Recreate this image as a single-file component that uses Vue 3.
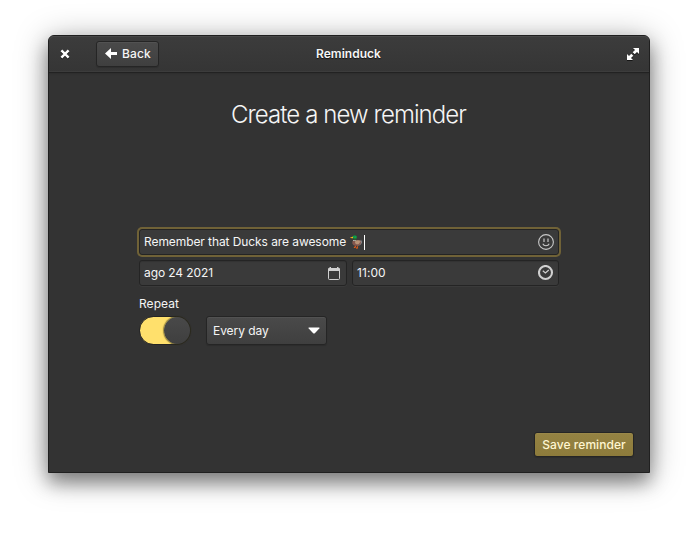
<script setup>
import { ref } from 'vue'

const message = ref('Remember that Ducks are awesome 🦆')
const date = ref('ago 24 2021')
const time = ref('11:00')
const interval = ref('Every day')
const repeat = ref(true)
</script>

<template>
  <div class="desktop">
    <main class="window">
      <header class="titlebar">
        <button class="icon-button close" aria-label="Close">
          <svg width="10" height="10" viewBox="0 0 10 10"><path d="M1.4 1.4 8.6 8.6M8.6 1.4 1.4 8.6" stroke="#fff" stroke-width="2.4" /></svg>
        </button>
        <button class="button back">
          <svg width="12" height="12" viewBox="0 0 12 12"><path d="M0 5.5 6 0V4H12V7H6V11Z" fill="#fff" /></svg>
          <span>Back</span>
        </button>
        <h1 class="title">Reminduck</h1>
        <button class="icon-button maximize" aria-label="Maximize">
          <svg width="12" height="12" viewBox="0 0 12 12"><path d="M6 0h6v6l-2-2-2.3 2.3-2-2L8 2zM0 6l2 2 2.3-2.3 2 2L4 10l2 2H0z" fill="#fff" /></svg>
        </button>
      </header>
      <section class="content">
        <h2 class="heading">Create a new reminder</h2>
        <form class="form" @submit.prevent>
          <div class="entry focused">
            <span class="message">{{ message }}</span><i class="caret"></i>
            <svg class="entry-icon smile" width="16" height="16" viewBox="0 0 16 16" fill="none" stroke="#c8c8c8">
              <circle cx="8" cy="8" r="7.4" stroke-width="1.1" />
              <path d="M6 4.5V8M10 4.5V8" stroke-width="1.2" />
              <path d="M4.8 9.8Q5.6 11.7 8 11.7T11.2 9.8" stroke-width="1.1" />
            </svg>
          </div>
          <div class="row">
            <div class="entry date">
              <span>{{ date }}</span>
              <svg class="entry-icon" width="12" height="13" viewBox="0 0 12 13">
                <path d="M.5 3.5V11.5Q.5 12.5 1.5 12.5H10.5Q11.5 12.5 11.5 11.5V3.5" fill="none" stroke="#d0d0d0" />
                <path d="M0 4V2Q0 1 1 1H1.5V0H3V1H9V0H10.5V1H11Q12 1 12 2V4Z" fill="#d0d0d0" />
              </svg>
            </div>
            <div class="entry time">
              <span>{{ time }}</span>
              <svg class="entry-icon" width="16" height="16" viewBox="0 0 16 16" fill="none" stroke="#d0d0d0">
                <circle cx="7.5" cy="7.5" r="6.5" stroke-width="2.1" />
                <path d="M4.8 5.8 7.4 8 10.8 5" stroke-width="1.2" />
              </svg>
            </div>
          </div>
          <label class="label">Repeat</label>
          <div class="repeat">
            <div class="switch" :class="{ on: repeat }" role="switch" :aria-checked="repeat"><i class="knob"></i></div>
            <button class="button select">
              <span>{{ interval }}</span>
              <svg width="12" height="7" viewBox="0 0 12 7"><path d="M1 .5H11Q12 .5 11.3 1.5L6.8 6.2Q6 7 5.2 6.2L.7 1.5Q0 .5 1 .5Z" fill="#fff" /></svg>
            </button>
          </div>
        </form>
        <footer class="actions">
          <button class="button save">Save reminder</button>
        </footer>
      </section>
    </main>
  </div>
</template>

<style>
body {
  background: #fff;
}
</style>

<style scoped>
* {
  box-sizing: border-box;
}
.desktop {
  width: 698px;
  height: 534px;
  padding: 35px 48px 61px;
  overflow: hidden;
  font-family: Inter, "Noto Sans", sans-serif;
  font-size: 12px;
  line-height: 16px;
  color: #f5f5f5;
}
.window {
  display: flex;
  flex-direction: column;
  width: 602px;
  height: 438px;
  background: #333;
  border: 1px solid #202020;
  border-radius: 6px 6px 0 0;
  box-shadow: 0 4px 32px rgba(0, 0, 0, .34), 0 10px 18px rgba(0, 0, 0, .36);
}
.titlebar {
  display: grid;
  grid-template-columns: 47px 63px 1fr 111px;
  align-items: center;
  height: 37px;
  background: linear-gradient(#3c3c3c, #353535);
  border-bottom: 1px solid #222;
  border-radius: 5px 5px 0 0;
  box-shadow: inset 0 1px #484848, inset 0 -1px #3c3c3c, 0 1px 2px rgba(0, 0, 0, .12);
}
button {
  margin: 0;
  padding: 0;
  border: 0;
  background: none;
  font: inherit;
  color: inherit;
}
svg {
  display: block;
  flex: none;
}
.icon-button svg {
  filter: drop-shadow(0 1px 0 rgba(0, 0, 0, .6));
}
.close {
  justify-self: start;
  margin-left: 11px;
}
.maximize {
  justify-self: end;
  margin-right: 10px;
}
.button {
  display: flex;
  align-items: center;
  border: 1px solid #252525;
  border-radius: 3px;
  background: linear-gradient(#4a4a4a, #3f3f3f);
  box-shadow: inset 0 1px #525252, 0 1px 1px rgba(0, 0, 0, .15);
}
.back {
  width: 63px;
  height: 26px;
  gap: 5px;
  padding-left: 8px;
  font-weight: 500;
  letter-spacing: .1px;
}
.title {
  margin: 0;
  text-align: center;
  font-size: 12px;
  font-weight: 600;
  letter-spacing: .03px;
  text-shadow: 0 1px 1px rgba(0, 0, 0, .7);
}
.content {
  display: flex;
  flex: 1;
  flex-direction: column;
  padding: 26px 15px 15px 90px;
}
.heading {
  margin: 0 76px 0 0;
  text-align: center;
  font-size: 24px;
  font-weight: 300;
  line-height: 32px;
  letter-spacing: -.91px;
  white-space: nowrap;
}
.form {
  width: 420px;
  margin-top: 98px;
}
.entry {
  display: flex;
  align-items: center;
  height: 26px;
  padding: 0 4px;
  border: 1px solid #242424;
  border-radius: 3px;
  background: #3a3a3a;
  box-shadow: inset 0 1px 1px rgba(0, 0, 0, .12), 0 1px #3a3a3a;
  letter-spacing: -.1px;
}
.entry.focused {
  box-shadow: 0 0 0 2px #706237;
}
.message {
  white-space: pre;
  letter-spacing: -.08px;
}
.caret {
  width: 1px;
  height: 15px;
  margin-left: -.6px;
  background: #fff;
}
.entry-icon {
  margin-left: auto;
}
.row {
  display: flex;
  gap: 5px;
  margin-top: 5px;
}
.date {
  width: 208px;
  padding-right: 6px;
}
.time {
  width: 207px;
  letter-spacing: .08px;
}
.label {
  display: block;
  margin-top: 10px;
  letter-spacing: .05px;
}
.repeat {
  display: flex;
  gap: 15px;
  margin-top: 4px;
}
.switch {
  display: flex;
  width: 52px;
  height: 29px;
  border: 1px solid #242424;
  border-radius: 15px;
  background: #3a3a3a;
}
.switch.on {
  justify-content: flex-end;
  background: linear-gradient(90deg, #ffe06c 60%, #2a2a2a 80%);
}
.knob {
  width: 26px;
  height: 27px;
  border-radius: 50%;
  background: linear-gradient(#494949, #3f3f3f);
  box-shadow: 0 0 1px 1px rgba(50, 45, 20, .5);
}
.select {
  justify-content: space-between;
  width: 121px;
  height: 29px;
  padding: 0 6px;
  letter-spacing: -.05px;
}
.actions {
  display: flex;
  justify-content: flex-end;
  margin-top: auto;
}
.save {
  justify-content: center;
  width: 100px;
  height: 25px;
  background: linear-gradient(#958343, #8d7b3b);
  box-shadow: inset 0 1px #9a8849, 0 1px 1px rgba(0, 0, 0, .15);
  color: #fff6d0;
  font-weight: 500;
  letter-spacing: .06px;
}
</style>
